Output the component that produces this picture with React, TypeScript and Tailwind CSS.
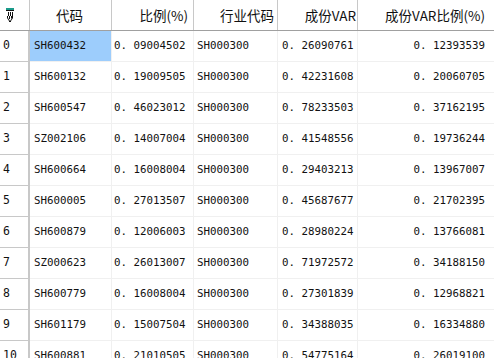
import clsx from "clsx";

const ROWS: [string, string, string, string, string][] = [
  ["SH600432", "0.09004502", "SH000300", "0.26090761", "0.12393539"],
  ["SH600132", "0.19009505", "SH000300", "0.42231608", "0.20060705"],
  ["SH600547", "0.46023012", "SH000300", "0.78233503", "0.37162195"],
  ["SZ002106", "0.14007004", "SH000300", "0.41548556", "0.19736244"],
  ["SH600664", "0.16008004", "SH000300", "0.29403213", "0.13967007"],
  ["SH600005", "0.27013507", "SH000300", "0.45687677", "0.21702395"],
  ["SH600879", "0.12006003", "SH000300", "0.28980224", "0.13766081"],
  ["SZ000623", "0.26013007", "SH000300", "0.71972572", "0.34188150"],
  ["SH600779", "0.16008004", "SH000300", "0.27301839", "0.12968821"],
  ["SH601179", "0.15007504", "SH000300", "0.34388035", "0.16334880"],
  ["SH600881", "0.21010505", "SH000300", "0.54775164", "0.26019100"],
];

const COLS = "grid grid-cols-[30px_82px_82px_84px_80px_136px]";
const mono = "font-['DejaVu_Sans_Mono','Liberation_Mono',monospace] text-[10.8px] text-[#111]";

function Num({ v }: { v: string }) {
  const [a, b] = v.split(".");
  return (
    <span className="whitespace-nowrap">
      {a}
      <span className="mr-[6.5px]">.</span>
      {b}
    </span>
  );
}

function HeadIcon() {
  return (
    <svg width="12" height="16" viewBox="0 0 12 16" className="ml-[4px]">
      <rect x="2" y="1" width="8" height="2" fill="#1a9a8a" />
      <rect x="2" y="3" width="8" height="1" fill="#111" />
      <path d="M3 4v5h1V5h1v4h1V5h1v4h1V5h1v6l-2 3v1H5v-1l-2-3z" fill="#111" />
      <path d="M4 9h1v3h1V9h1v3h1v-1l-2 3-2-3z" fill="#fff" />
    </svg>
  );
}

export default function App() {
  const head = "flex items-center h-[30px] border-r border-[#c8c8c8] text-[13.5px] text-[#111] whitespace-nowrap";
  return (
    <div className="w-[494px] h-[358px] overflow-hidden bg-white font-['Noto_Sans_CJK_SC','Noto_Sans',sans-serif]">
      <div className={clsx(COLS, "border-b border-[#a0a0a0]")}>
        <div className={clsx(head, "justify-start")}>
          <HeadIcon />
        </div>
        <div className={clsx(head, "justify-center pr-[2px]")}>代码</div>
        <div className={clsx(head, "justify-end pr-[5px]")}>比例(%)</div>
        <div className={clsx(head, "justify-end pr-[3px]")}>行业代码</div>
        <div className={clsx(head, "justify-end pr-[1px]")}>成份VAR</div>
        <div className={clsx(head, "justify-end pr-[9px] border-r-0")}>成份VAR比例(%)</div>
      </div>
      {ROWS.map((r, i) => (
        <div key={i} className={clsx(COLS, "h-[31px]")}>
          <div className={clsx(mono, "flex items-center pl-[3px] text-[11.5px] border-r-2 border-b border-r-[#c8c8c8] border-b-[#c8c8c8] bg-white")}>
            {i}
          </div>
          <div
            className={clsx(
              mono,
              "flex items-center pl-[4px] border-r border-b border-[#f0f0f0]",
              i === 0 && "bg-[#9dcdfc]",
            )}
          >
            {r[0]}
          </div>
          <div className={clsx(mono, "flex items-center pl-[2px] border-r border-b border-[#f0f0f0]")}>
            <Num v={r[1]} />
          </div>
          <div className={clsx(mono, "flex items-center pl-[3px] border-r border-b border-[#f0f0f0]")}>{r[2]}</div>
          <div className={clsx(mono, "flex items-center pl-[4px] border-r border-b border-[#f0f0f0]")}>
            <Num v={r[3]} />
          </div>
          <div className={clsx(mono, "flex items-center justify-end pr-[9px] border-b border-[#f0f0f0]")}>
            <Num v={r[4]} />
          </div>
        </div>
      ))}
    </div>
  );
}
